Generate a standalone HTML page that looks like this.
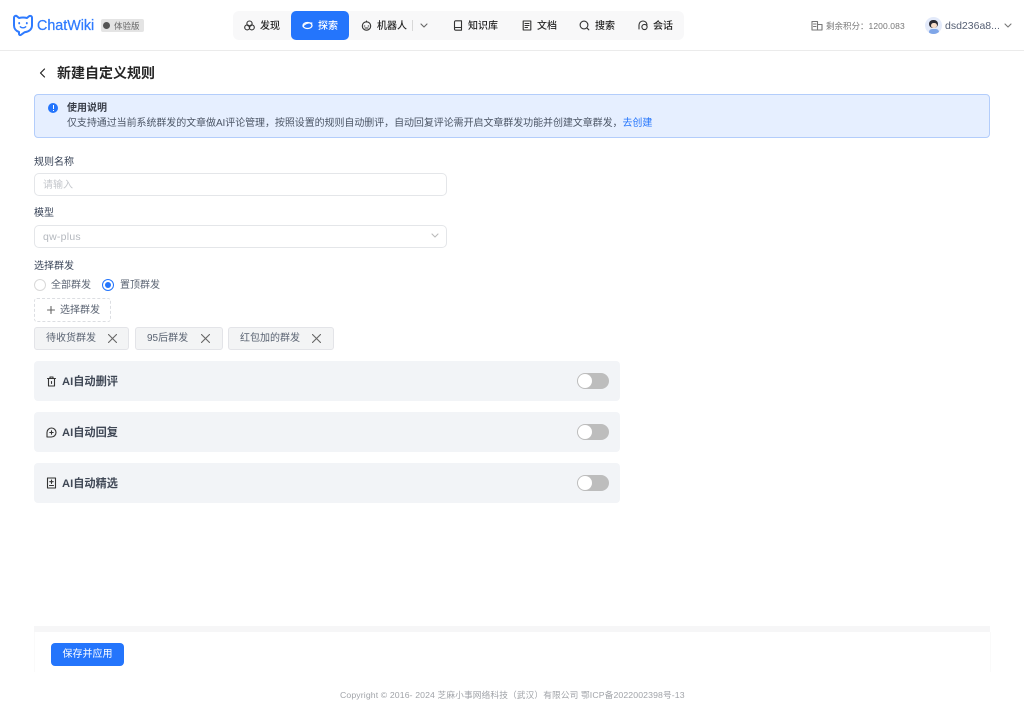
<!DOCTYPE html>
<html lang="zh">
<head>
<meta charset="utf-8">
<title>ChatWiki</title>
<style>
html,body{margin:0;padding:0;background:#fff}
body{width:1024px;height:714px;overflow:hidden;position:relative;font-family:"Liberation Sans","Noto Sans CJK SC",sans-serif;font-size:10px;color:#3a4559;filter:blur(.25px)}
.a{position:absolute;white-space:nowrap}
.t{position:absolute;white-space:nowrap;line-height:14px}
svg{position:absolute;fill:none;stroke:#333;stroke-width:1.1;stroke-linecap:round;stroke-linejoin:round}
.nav{font-size:10px;color:#262626;font-weight:500}
.label{color:#3a4559;font-size:10px}
.input{position:absolute;left:34px;width:411px;height:21px;border:1px solid #e4e6e9;border-radius:5px;background:#fff}
.tag{position:absolute;top:327px;height:21px;background:#f3f4f5;border:1px solid #e3e4e8;border-radius:3px;box-sizing:content-box}
.panel{position:absolute;left:34px;width:586px;height:40px;background:#f2f4f7;border-radius:4px}
.panel .n{position:absolute;left:28px;top:13px;font-size:11.200px;line-height:16px;font-weight:700;color:#3f4755;white-space:nowrap}
.sw{position:absolute;left:543px;top:12px;width:32px;height:16px;border-radius:8px;background:#bdbdbd}
.sw i{position:absolute;left:1px;top:1px;width:14px;height:14px;border-radius:50%;background:#fff;display:block}
</style>
</head>
<body>
<!-- header -->
<div class="a" style="left:0;top:0;width:1024px;height:50px;background:#fff;border-bottom:1px solid #ebebeb"></div>
<svg style="left:12px;top:14px" width="23" height="23" viewBox="0 0 23 23"><path d="M2 4C2 2 3.800 1.300 5 2.300L7 4C9.500 3.400 12.500 3.400 15 4L17 2.300C18.300 1.300 20 2 20 4V11.500C20 15.500 16.500 18 12.500 18.300L9 20.800C8 21.500 7 21 7 19.800V18C4 17 2 14.500 2 11.500Z" stroke="#2f7bff" stroke-width="2"/><path d="M7.200 9v.4M14.800 9v.4" stroke="#2f7bff" stroke-width="1.900"/><path d="M8.300 12.800c1.600 1.300 3.800 1.300 5.400 0" stroke="#2f7bff" stroke-width="1.400"/></svg>
<div class="t" style="left:37px;top:17px;font-size:14.300px;line-height:18px;color:#2f7bff;-webkit-text-stroke:.25px #2f7bff">ChatWiki</div>
<div class="a" style="left:101px;top:19px;width:43px;height:13px;background:#e4e4e4;border-radius:2px"></div>
<div class="a" style="left:102.500px;top:22px;width:7px;height:7px;border-radius:50%;background:#555"></div>
<div class="t" style="left:114px;top:19px;font-size:8.500px;color:#666">体验版</div>

<div class="a" style="left:233px;top:11px;width:451px;height:29px;background:#f8f8f9;border-radius:6px"></div>
<div class="a" style="left:291px;top:11px;width:58px;height:29px;background:#2475fc;border-radius:5px"></div>

<svg style="left:244px;top:20px" width="11" height="11" viewBox="0 0 11 11"><circle cx="5.500" cy="3.600" r="2.600"/><circle cx="3.200" cy="7.400" r="2.500"/><circle cx="7.800" cy="7.400" r="2.500"/></svg>
<div class="t nav" style="left:260px;top:19.500px">发现</div>
<svg style="left:302px;top:21px" width="11" height="9" viewBox="0 0 11 9"><ellipse cx="5.500" cy="4.500" rx="4.500" ry="3" stroke="#fff" stroke-width="1.300"/><path d="M1 5.500c2-3 5-4 9-3.500" stroke="#fff"/></svg>
<div class="t" style="left:318px;top:19.500px;color:#fff;font-weight:500">探索</div>
<svg style="left:361px;top:20px" width="11" height="11" viewBox="0 0 11 11"><circle cx="5.500" cy="6" r="4.200"/><path d="M5.500 1v1M3.200 6h.6M7.200 6h.6M4 8h3"/></svg>
<div class="t nav" style="left:377px;top:19.500px">机器人</div>
<div class="a" style="left:412px;top:20px;width:1px;height:11px;background:#d8d8d8"></div>
<svg style="left:420px;top:23px" width="8" height="6" viewBox="0 0 8 6"><path d="M1 1l3 3 3-3" stroke="#666"/></svg>
<svg style="left:453px;top:20px" width="10" height="11" viewBox="0 0 10 11"><path d="M1.500 2c0-.8.6-1.200 1.200-1.200H8.500v9.400H2.700c-.7 0-1.200-.5-1.200-1.200ZM1.500 8.200c.2-.5.6-.7 1.200-.7h5.800"/></svg>
<div class="t nav" style="left:468px;top:19.500px">知识库</div>
<svg style="left:522px;top:20px" width="10" height="11" viewBox="0 0 10 11"><path d="M1.200 1h7.600v9H1.200ZM3 3.500h4M3 5.500h4M3 7.500h2.500"/></svg>
<div class="t nav" style="left:537px;top:19.500px">文档</div>
<svg style="left:579px;top:20px" width="11" height="11" viewBox="0 0 11 11"><circle cx="5" cy="5" r="3.900"/><path d="M7.800 7.800l2 2"/></svg>
<div class="t nav" style="left:595px;top:19.500px">搜索</div>
<svg style="left:638px;top:20px" width="11" height="11" viewBox="0 0 11 11"><path d="M1 9V5a4 4 0 0 1 8 0"/><circle cx="6.500" cy="7" r="2.600"/></svg>
<div class="t nav" style="left:653px;top:19.500px">会话</div>

<svg style="left:811px;top:20px" width="12" height="11" viewBox="0 0 12 11"><path d="M1 10V1.500h5.500V10ZM6.500 4.500H11V10H6.500ZM2.500 4h2.500M2.500 6.500h2.500" stroke="#777"/></svg>
<div class="t" style="left:826px;top:18.500px;font-size:8.500px;color:#777">剩余积分：<span style="letter-spacing:.1px">1200.083</span></div>
<div class="a" style="left:925px;top:17px;width:17px;height:17px;border-radius:50%;background:#e3eafa;overflow:hidden">
  <div class="a" style="left:4px;top:3px;width:9px;height:8px;border-radius:4px;background:#2b2b33"></div>
  <div class="a" style="left:5.500px;top:6px;width:6px;height:5px;border-radius:3px;background:#f6dcc8"></div>
  <div class="a" style="left:3.500px;top:12px;width:10px;height:6px;border-radius:4px;background:#7fa6e8"></div>
</div>
<div class="t" style="left:945px;top:19px;font-size:10.500px;color:#566074">dsd236a8...</div>
<svg style="left:1004px;top:23px" width="8" height="6" viewBox="0 0 8 6"><path d="M1 1l3 3 3-3" stroke="#777"/></svg>

<!-- title -->
<svg style="left:38px;top:68px" width="9" height="10" viewBox="0 0 9 10"><path d="M6.500 1L2.500 5l4 4" stroke="#222" stroke-width="1.200"/></svg>
<div class="t" style="left:57px;top:63.500px;font-size:14px;line-height:19px;font-weight:700;color:#262626">新建自定义规则</div>

<!-- alert -->
<div class="a" style="left:34px;top:94px;width:954px;height:42px;background:#e6efff;border:1px solid #b3cdfb;border-radius:4px"></div>
<div class="a" style="left:48px;top:103px;width:10px;height:10px;border-radius:50%;background:#2475fc"></div>
<div class="a" style="left:52.500px;top:105px;width:1px;height:3.500px;background:#fff"></div>
<div class="a" style="left:52.500px;top:109.500px;width:1px;height:1.200px;background:#fff"></div>
<div class="t" style="left:67px;top:101.500px;font-weight:700;color:#3a3f4a">使用说明</div>
<div class="t" style="left:67px;top:117px;color:#4c5666;letter-spacing:-.07px">仅支持通过当前系统群发的文章做AI评论管理，按照设置的规则自动删评，自动回复评论需开启文章群发功能并创建文章群发，<span style="color:#2475fc">去创建</span></div>

<!-- form -->
<div class="t label" style="left:34px;top:156px">规则名称</div>
<div class="input" style="top:173px"></div>
<div class="t" style="left:43px;top:178.500px;color:#c4c7cc">请输入</div>

<div class="t label" style="left:34px;top:207px">模型</div>
<div class="input" style="top:225px"></div>
<div class="t" style="left:43px;top:229.500px;color:#b4b8be;font-size:10.500px;letter-spacing:.25px">qw-plus</div>
<svg style="left:431px;top:233px" width="8" height="6" viewBox="0 0 8 6"><path d="M1 1l3 3 3-3" stroke="#bbb"/></svg>

<div class="t label" style="left:34px;top:260px">选择群发</div>
<div class="a" style="left:34px;top:279px;width:10px;height:10px;border:1px solid #d9d9d9;border-radius:50%"></div>
<div class="t" style="left:51px;top:278.500px;color:#5a6372">全部群发</div>
<div class="a" style="left:102px;top:279px;width:10px;height:10px;border:1px solid #2475fc;border-radius:50%"></div>
<div class="a" style="left:105px;top:282px;width:6px;height:6px;background:#2475fc;border-radius:50%"></div>
<div class="t" style="left:120px;top:278.500px;color:#5a6372">置顶群发</div>

<div class="a" style="left:34px;top:298px;width:75px;height:22px;border:1px dashed #dcdee2;border-radius:3px"></div>
<svg style="left:47px;top:306px" width="8" height="8" viewBox="0 0 8 8"><path d="M4 .5v7M.5 4h7" stroke="#666"/></svg>
<div class="t" style="left:60px;top:303.500px;color:#5a6372">选择群发</div>

<div class="tag" style="left:34px;width:93px"></div>
<div class="t" style="left:46px;top:331.500px;color:#5a6372">待收货群发</div>
<svg style="left:108px;top:334px" width="9" height="9" viewBox="0 0 9 9"><path d="M.5 .5l8 8M8.500 .5l-8 8" stroke="#666"/></svg>
<div class="tag" style="left:135px;width:86px"></div>
<div class="t" style="left:147px;top:331.500px;color:#5a6372">95后群发</div>
<svg style="left:201px;top:334px" width="9" height="9" viewBox="0 0 9 9"><path d="M.5 .5l8 8M8.500 .5l-8 8" stroke="#666"/></svg>
<div class="tag" style="left:228px;width:104px"></div>
<div class="t" style="left:240px;top:331.500px;color:#5a6372">红包加的群发</div>
<svg style="left:312px;top:334px" width="9" height="9" viewBox="0 0 9 9"><path d="M.5 .5l8 8M8.500 .5l-8 8" stroke="#666"/></svg>

<!-- panels -->
<div class="panel" style="top:361px"><div class="n">AI自动删评</div><div class="sw"><i></i></div></div>
<div class="panel" style="top:412px"><div class="n">AI自动回复</div><div class="sw"><i></i></div></div>
<div class="panel" style="top:463px"><div class="n">AI自动精选</div><div class="sw"><i></i></div></div>
<svg style="left:46px;top:376px" width="11" height="11" viewBox="0 0 11 11"><path d="M1.500 2.500h8M4 2.500V1h3v1.500M2.500 2.500V10h6V2.500M5.500 5.500v2"/></svg>
<svg style="left:46px;top:427px" width="11" height="12" viewBox="0 0 11 12"><path d="M5.500 1a4.500 4.500 0 1 1 0 9H1V5.500A4.500 4.500 0 0 1 5.500 1ZM5.500 3.800v3.400M3.800 5.500h3.400"/></svg>
<svg style="left:46px;top:477px" width="11" height="12" viewBox="0 0 11 12"><path d="M1.500 1h8v10h-8ZM5.500 3v3.500M3.800 4.700h3.400M3.500 8.500h4"/></svg>

<!-- footer -->
<div class="a" style="left:34px;top:626px;width:956px;height:6px;background:#f6f6f7"></div>
<div class="a" style="left:34px;top:632px;width:955px;height:40px;border-left:1px solid #fafafa;border-right:1px solid #fafafa"></div>
<div class="a" style="left:51px;top:643px;width:73px;height:23px;background:#2475fc;border-radius:4px"></div>
<div class="t" style="left:51px;top:648px;width:73px;text-align:center;color:#fff;line-height:13px">保存并应用</div>
<div class="t" style="left:340px;top:688px;font-size:8.700px;letter-spacing:.12px;color:#a0a3a8">Copyright © 2016- 2024 芝麻小事网络科技（武汉）有限公司 鄂ICP备2022002398号-13</div>
</body>
</html>
